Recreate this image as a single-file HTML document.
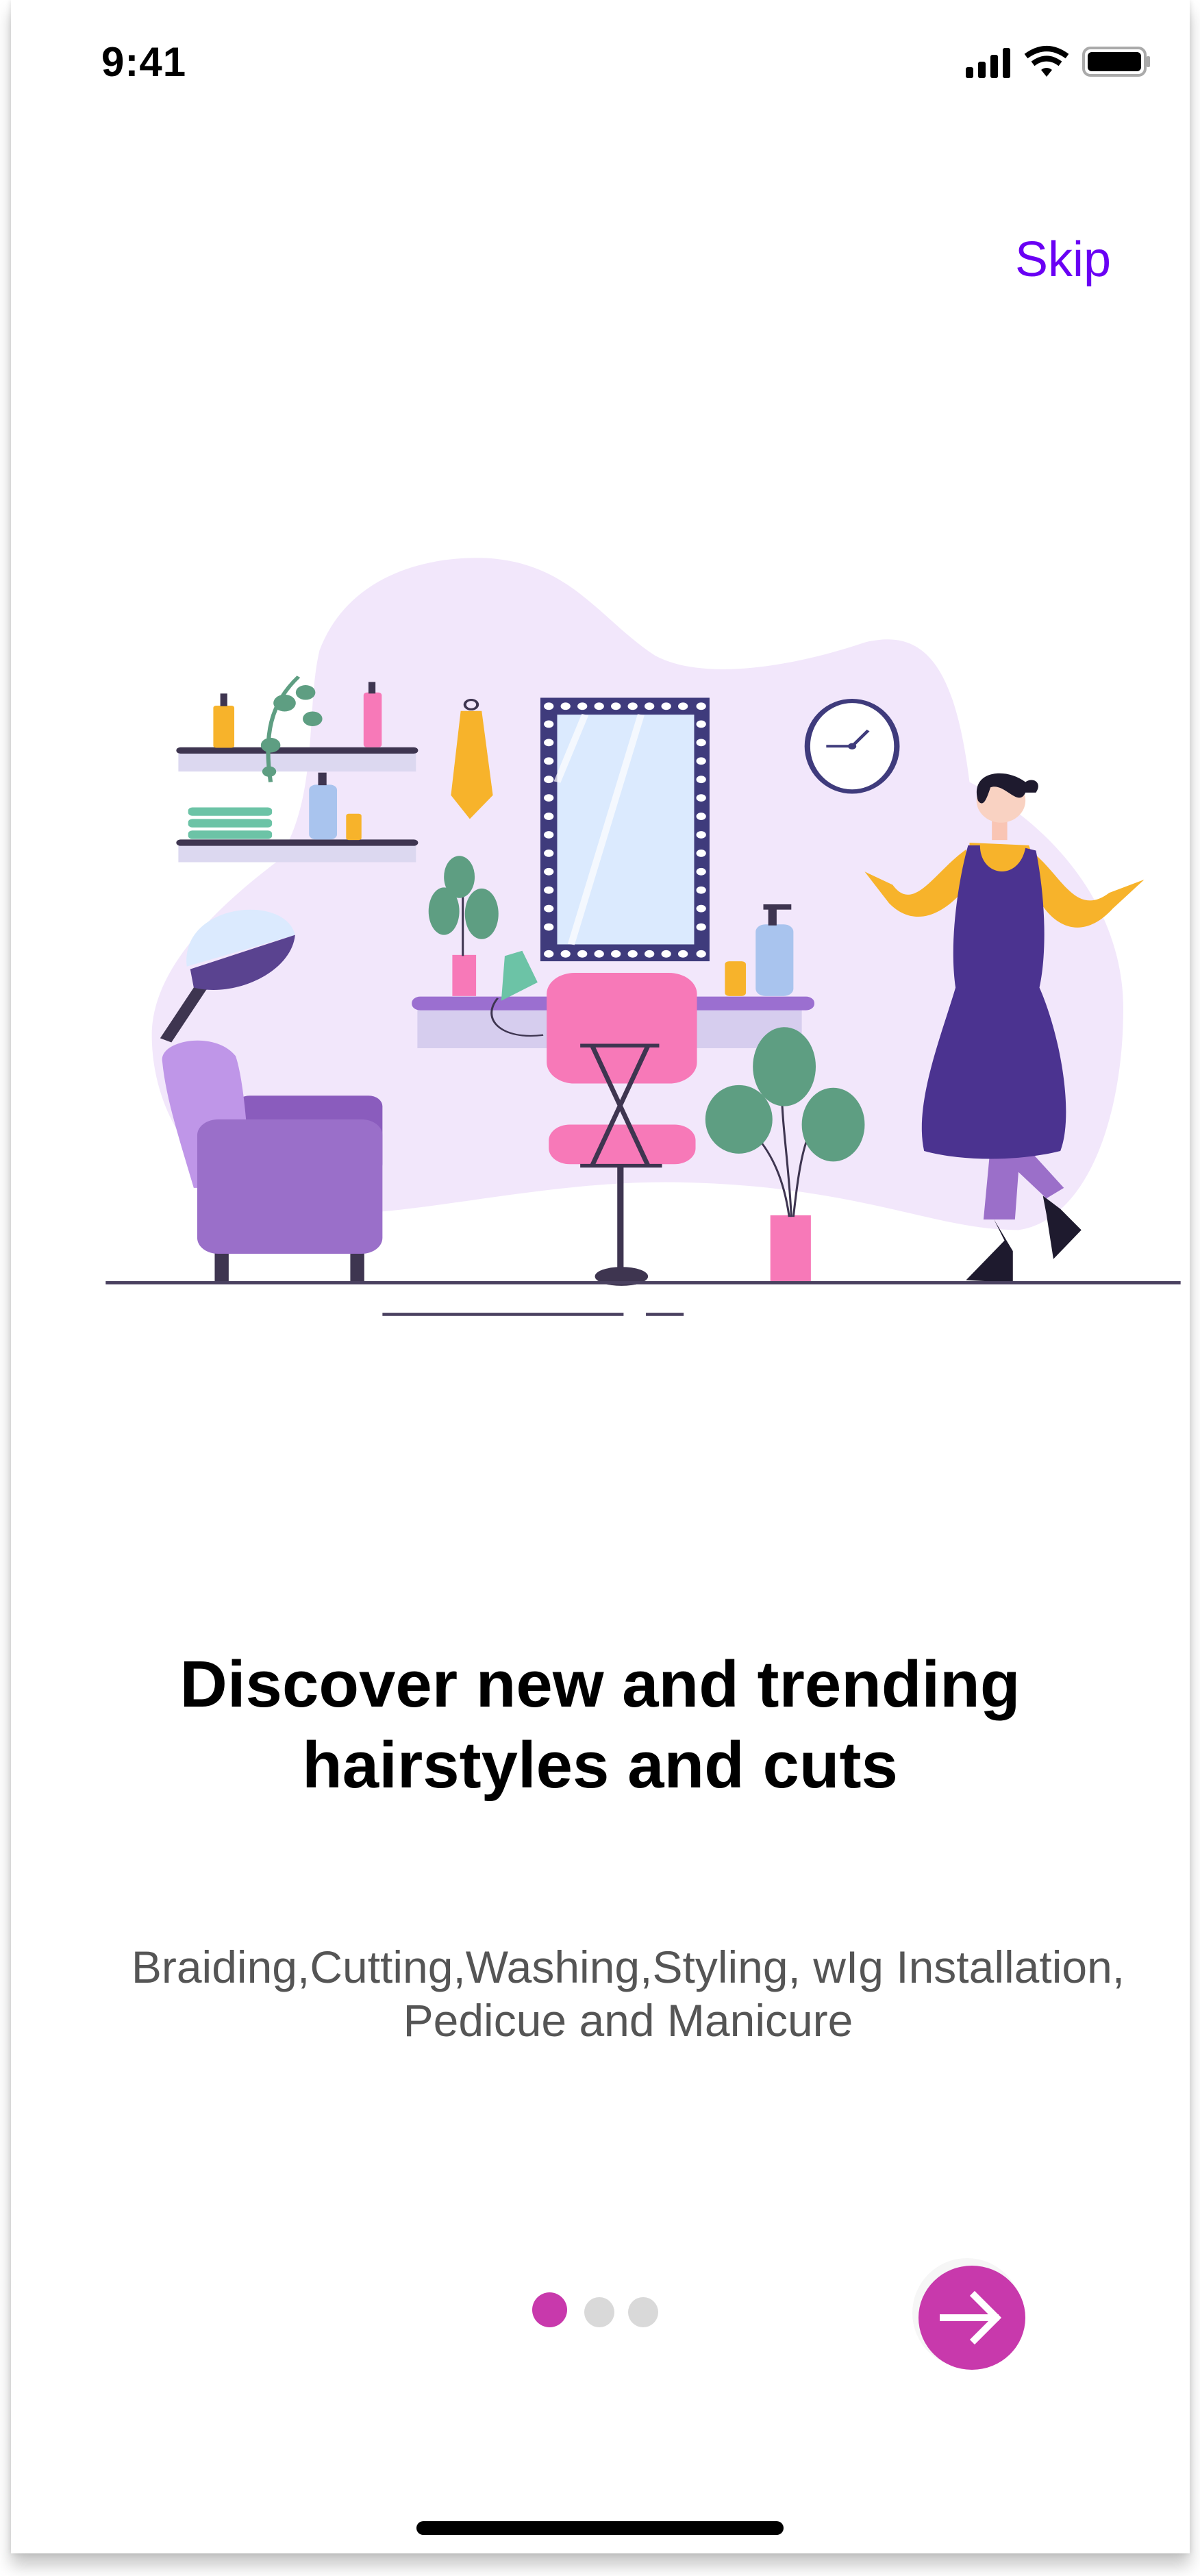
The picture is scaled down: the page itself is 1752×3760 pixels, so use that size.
<!DOCTYPE html>
<html><head><meta charset="utf-8">
<style>
html,body{margin:0;padding:0;background:#fff;}
body{width:1752px;height:3760px;position:relative;overflow:hidden;font-family:"Liberation Sans",sans-serif;}
.card{position:absolute;left:16px;top:0;width:1721px;height:3727px;background:#fff;box-shadow:0 18px 22px rgba(0,0,0,0.22),0 0 8px rgba(0,0,0,0.12);}
.abs{position:absolute;}
</style></head><body>
<div class="card"></div>
<div class="abs" style="left:148px;top:56px;font-size:60px;font-weight:bold;color:#000;letter-spacing:1px;">9:41</div>
<svg class="abs" style="left:1408px;top:66px" width="272" height="50" viewBox="0 0 272 50">
 <rect x="2" y="32" width="11" height="16" rx="3"/>
 <rect x="20" y="24" width="11" height="24" rx="3"/>
 <rect x="38" y="14" width="11" height="34" rx="3"/>
 <rect x="56" y="4" width="11" height="44" rx="3"/>
 <path d="M90 16 Q120 -6 150 16" stroke="#000" stroke-width="8" fill="none"/>
 <path d="M100 27 Q120 12 140 27" stroke="#000" stroke-width="8" fill="none"/>
 <path d="M112 36 Q120 30 128 36 L120 46 Z" fill="#000"/>
 <rect x="174" y="4" width="90" height="40" rx="10" fill="none" stroke="#aaa" stroke-width="4"/>
 <rect x="180" y="10" width="78" height="28" rx="6"/>
 <rect x="266" y="16" width="5" height="16" rx="2" fill="#aaa"/>
</svg>
<div class="abs" style="left:1482px;top:338px;font-size:72px;color:#6a00f4;">Skip</div>

<svg class="abs" style="left:140px;top:780px" width="1600" height="1200" viewBox="0 0 1568 1560" preserveAspectRatio="none">
 <path d="M320 220 C360 80 470 40 560 45 C680 55 720 160 800 230 C870 280 1000 250 1100 205 C1190 175 1230 260 1250 470 C1380 560 1470 720 1470 900 C1470 1100 1420 1300 1320 1320 C1200 1320 1100 1240 850 1230 C650 1220 450 1300 300 1290 C150 1260 80 1100 80 950 C80 820 180 700 260 620 C320 500 300 330 320 220 Z" fill="#f2e7fb"/>
 <rect x="118" y="415" width="340" height="35" fill="#dcd8f0"/>
 <rect x="115" y="404" width="346" height="12" rx="6" fill="#3e3550"/>
 <rect x="118" y="590" width="340" height="32" fill="#dcd8f0"/>
 <rect x="115" y="579" width="346" height="12" rx="6" fill="#3e3550"/>
 <rect x="168" y="325" width="30" height="80" rx="4" fill="#f7b32b"/><rect x="178" y="302" width="10" height="24" fill="#3e3550"/>
 <rect x="383" y="300" width="26" height="104" rx="5" fill="#f779b8"/><rect x="390" y="280" width="10" height="22" fill="#3e3550"/>
 <path d="M290 270 C250 320 240 380 250 470" stroke="#5e9e82" stroke-width="6" fill="none"/>
 <circle cx="270" cy="320" r="16" fill="#5e9e82"/><circle cx="300" cy="300" r="14" fill="#5e9e82"/><circle cx="250" cy="400" r="14" fill="#5e9e82"/><circle cx="310" cy="350" r="14" fill="#5e9e82"/><circle cx="248" cy="450" r="10" fill="#5e9e82"/>
 <rect x="132" y="518" width="120" height="16" rx="6" fill="#6cc3a6"/><rect x="132" y="540" width="120" height="16" rx="6" fill="#6cc3a6"/><rect x="132" y="562" width="120" height="16" rx="6" fill="#6cc3a6"/>
 <rect x="305" y="475" width="40" height="104" rx="10" fill="#a9c4ee"/><rect x="318" y="452" width="12" height="24" fill="#3e3550"/>
 <rect x="358" y="530" width="22" height="50" rx="4" fill="#f7b32b"/>
 <circle cx="537" cy="323" r="9" fill="none" stroke="#3e3550" stroke-width="4"/>
 <path d="M522 335 L552 335 L568 495 L535 540 L508 495 Z" fill="#f7b32b"/>
 <rect x="636" y="310" width="242" height="500" fill="#3f3b7c"/>
 <rect x="660" y="342" width="196" height="436" fill="#dbeafe"/>
 <path d="M700 342 L660 470 M780 342 L680 778" stroke="#fff" stroke-width="10" opacity="0.7"/>
 <g fill="#fff">
  <circle cx="648" cy="326" r="7"/><circle cx="672" cy="326" r="7"/><circle cx="696" cy="326" r="7"/><circle cx="720" cy="326" r="7"/><circle cx="744" cy="326" r="7"/><circle cx="768" cy="326" r="7"/><circle cx="792" cy="326" r="7"/><circle cx="816" cy="326" r="7"/><circle cx="840" cy="326" r="7"/><circle cx="866" cy="326" r="7"/>
  <circle cx="648" cy="796" r="7"/><circle cx="672" cy="796" r="7"/><circle cx="696" cy="796" r="7"/><circle cx="720" cy="796" r="7"/><circle cx="744" cy="796" r="7"/><circle cx="768" cy="796" r="7"/><circle cx="792" cy="796" r="7"/><circle cx="816" cy="796" r="7"/><circle cx="840" cy="796" r="7"/><circle cx="866" cy="796" r="7"/>
  <circle cx="648" cy="360" r="7"/><circle cx="648" cy="395" r="7"/><circle cx="648" cy="430" r="7"/><circle cx="648" cy="465" r="7"/><circle cx="648" cy="500" r="7"/><circle cx="648" cy="535" r="7"/><circle cx="648" cy="570" r="7"/><circle cx="648" cy="605" r="7"/><circle cx="648" cy="640" r="7"/><circle cx="648" cy="675" r="7"/><circle cx="648" cy="710" r="7"/><circle cx="648" cy="745" r="7"/>
  <circle cx="866" cy="360" r="7"/><circle cx="866" cy="395" r="7"/><circle cx="866" cy="430" r="7"/><circle cx="866" cy="465" r="7"/><circle cx="866" cy="500" r="7"/><circle cx="866" cy="535" r="7"/><circle cx="866" cy="570" r="7"/><circle cx="866" cy="605" r="7"/><circle cx="866" cy="640" r="7"/><circle cx="866" cy="675" r="7"/><circle cx="866" cy="710" r="7"/><circle cx="866" cy="745" r="7"/>
 </g>
 <ellipse cx="1082" cy="402" rx="64" ry="86" fill="#fff" stroke="#3f3b7c" stroke-width="8"/>
 <path d="M1082 402 L1045 402 M1082 402 L1105 372" stroke="#3f3b7c" stroke-width="5"/>
 <circle cx="1082" cy="402" r="6" fill="#3f3b7c"/>
 <rect x="460" y="900" width="550" height="75" fill="#d6cdee"/>
 <rect x="452" y="877" width="576" height="26" rx="12" fill="#9b6fd0"/>
 <rect x="510" y="798" width="34" height="78" fill="#f779b8"/>
 <path d="M525 800 L525 640" stroke="#3e3550" stroke-width="3"/>
 <ellipse cx="520" cy="650" rx="22" ry="40" fill="#5e9e82"/><ellipse cx="498" cy="715" rx="22" ry="45" fill="#5e9e82"/><ellipse cx="552" cy="720" rx="24" ry="48" fill="#5e9e82"/>
 <path d="M585 800 L610 790 L632 850 L580 885 Z" fill="#6cc3a6"/>
 <path d="M575 880 C550 920 580 960 640 950" stroke="#3e3550" stroke-width="3" fill="none"/>
 <rect x="900" y="810" width="30" height="66" rx="6" fill="#f7b32b"/>
 <rect x="944" y="740" width="54" height="136" rx="14" fill="#a9c4ee"/><rect x="962" y="706" width="12" height="36" fill="#3e3550"/><rect x="955" y="702" width="40" height="10" fill="#3e3550"/>
 <rect x="645" y="832" width="215" height="210" rx="40" fill="#f779b8"/>
 <rect x="648" y="1120" width="210" height="75" rx="30" fill="#f779b8"/>
 <path d="M693 970 L806 970 M710 970 L790 1198 M790 970 L710 1198 M693 1198 L810 1198" stroke="#3e3550" stroke-width="7"/>
 <rect x="746" y="1195" width="9" height="200" fill="#3e3550"/>
 <ellipse cx="752" cy="1408" rx="38" ry="18" fill="#3e3550"/>
 <path d="M100 960 L150 860 L175 830" stroke="#3e3550" stroke-width="18" fill="none"/>
 <path d="M130 820 C120 700 270 680 285 760 Z" fill="#dbeafe"/>
 <path d="M135 825 L285 760 C280 830 200 880 140 860 Z" fill="#5a4390"/>
 <rect x="170" y="1360" width="20" height="60" fill="#3e3550"/><rect x="364" y="1360" width="20" height="60" fill="#3e3550"/>
 <rect x="200" y="1065" width="210" height="150" rx="20" fill="#8a5cbd"/>
 <path d="M95 1000 C90 960 170 940 200 990 C215 1050 220 1200 220 1240 L140 1240 C120 1150 100 1070 95 1000 Z" fill="#bf96e8"/>
 <rect x="145" y="1110" width="265" height="255" rx="30" fill="#9a6fc9"/>
 <rect x="965" y="1292" width="58" height="126" fill="#f779b8"/>
 <path d="M995 1295 C990 1150 970 1050 990 960 M998 1295 C1010 1150 1020 1100 1070 1080 M992 1295 C980 1180 940 1120 900 1100" stroke="#3e3550" stroke-width="3" fill="none"/>
 <ellipse cx="985" cy="1010" rx="45" ry="75" fill="#5e9e82"/><ellipse cx="1055" cy="1120" rx="45" ry="70" fill="#5e9e82"/><ellipse cx="920" cy="1110" rx="48" ry="65" fill="#5e9e82"/>
 <path d="M1280 1160 L1270 1300 L1315 1300 L1320 1210 L1360 1260 L1385 1240 L1330 1160 Z" fill="#9b6fc9"/>
 <path d="M1285 1300 L1300 1340 L1245 1415 L1312 1420 L1312 1360 Z" fill="#1e1a2e"/>
 <path d="M1355 1255 L1380 1280 L1410 1320 L1370 1375 L1360 1290 Z" fill="#1e1a2e"/>
 <path d="M1245 598 C1200 640 1170 720 1140 665 L1100 640 L1135 700 C1180 760 1230 700 1250 660 Z" fill="#f7b32b"/>
 <path d="M1335 598 C1380 640 1400 730 1450 680 L1500 655 L1455 710 C1400 790 1350 720 1340 660 Z" fill="#f7b32b"/>
 <path d="M1250 585 L1335 590 L1350 650 L1250 650 Z" fill="#f7b32b"/>
 <path d="M1248 590 L1265 590 C1265 650 1320 660 1330 595 L1345 600 C1360 700 1360 800 1350 860 C1380 950 1400 1100 1380 1170 C1320 1190 1240 1190 1185 1170 C1170 1080 1210 950 1230 860 C1220 770 1235 650 1248 590 Z" fill="#4b3390"/>
 <rect x="1282" y="540" width="22" height="40" fill="#f9c5b4"/>
 <ellipse cx="1295" cy="505" rx="35" ry="42" fill="#f9d2c2"/>
 <path d="M1262 505 C1250 450 1300 440 1330 470 C1340 460 1355 470 1345 490 L1330 490 C1320 520 1300 470 1280 480 C1275 500 1270 520 1262 505 Z" fill="#1e1a2e"/>
 <rect x="14" y="1417" width="1538" height="6" fill="#4a4160"/>
 <rect x="410" y="1477" width="345" height="6" fill="#4a4160"/>
 <rect x="787" y="1477" width="54" height="6" fill="#4a4160"/>
</svg>

<div class="abs" style="left:0;width:1752px;top:2400px;text-align:center;font-size:96px;font-weight:bold;line-height:118px;color:#000;">Discover new and trending<br>hairstyles and cuts</div>
<div class="abs" style="left:0;width:1752px;top:2832px;text-align:center;font-size:66px;line-height:78px;color:#555;padding-left:82px;box-sizing:border-box;">Braiding,Cutting,Washing,Styling, wIg Installation,<br>Pedicue and Manicure</div>

<div class="abs" style="left:777px;top:3346px;width:51px;height:51px;border-radius:50%;background:#c839ac;"></div>
<div class="abs" style="left:853px;top:3353px;width:44px;height:44px;border-radius:50%;background:#d9d9d9;"></div>
<div class="abs" style="left:917px;top:3353px;width:44px;height:44px;border-radius:50%;background:#d9d9d9;"></div>
<div class="abs" style="left:1332px;top:3296px;width:160px;height:160px;border-radius:50%;background:#f6f6f6;"></div>
<div class="abs" style="left:1341px;top:3307px;width:156px;height:152px;border-radius:50%;background:#c839ac;"></div>
<svg class="abs" style="left:1341px;top:3307px" width="156" height="152" viewBox="0 0 156 152">
 <path d="M36 76 L112 76 M82 44 L114 76 L82 108" stroke="#fff" stroke-width="10" fill="none" stroke-linecap="square"/>
</svg>
<div class="abs" style="left:608px;top:3680px;width:536px;height:20px;border-radius:10px;background:#000;"></div>
</body></html>
